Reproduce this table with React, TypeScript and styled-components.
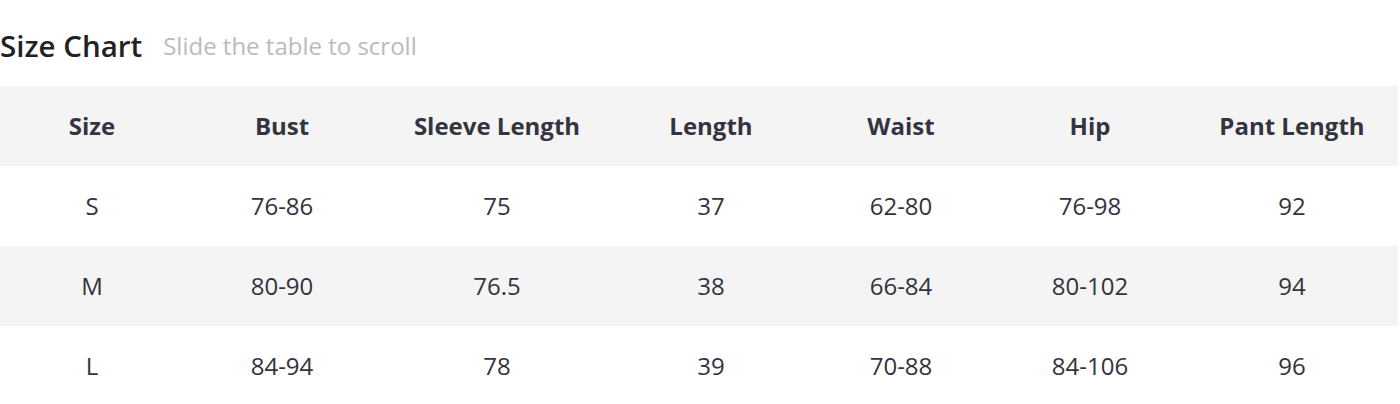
import React from "react";
import styled, { createGlobalStyle } from "styled-components";

const Global = createGlobalStyle`
  html, body { margin: 0; padding: 0; background: #fff; }
  body { font-family: "Open Sans", "Noto Sans", sans-serif; }
`;

const Wrap = styled.div`
  width: 1398px;
`;

const TitleBar = styled.div`
  display: flex;
  align-items: center;
  gap: 21px;
  height: 86px;
  box-sizing: border-box;
  padding-top: 4px;
`;

const Title = styled.h2`
  margin: 0;
  font-size: 29.5px;
  font-weight: 600;
  color: #222;
`;

const Hint = styled.span`
  font-size: 24px;
  color: #bbb;
`;

const Table = styled.table`
  border-collapse: collapse;
  table-layout: fixed;
  width: 1398px;
`;

const Row = styled.tr<{ $shade: boolean }>`
  height: 80px;
  background: ${(p) => (p.$shade ? "#f4f4f4" : "#fff")};
`;

const Th = styled.th`
  font-size: 24px;
  font-weight: 700;
  color: #343441;
  text-align: center;
  padding: 0 0 2px;
`;

const Td = styled.td`
  font-size: 24px;
  font-weight: 400;
  color: #33333d;
  text-align: center;
  padding: 0 0 2px;
`;

const widths = [184, 196, 234, 194, 186, 192, 212];
const heads = ["Size", "Bust", "Sleeve Length", "Length", "Waist", "Hip", "Pant Length"];
const rows = [
  ["S", "76-86", "75", "37", "62-80", "76-98", "92"],
  ["M", "80-90", "76.5", "38", "66-84", "80-102", "94"],
  ["L", "84-94", "78", "39", "70-88", "84-106", "96"],
];

export default function App() {
  return (
    <Wrap>
      <Global />
      <TitleBar>
        <Title>Size Chart</Title>
        <Hint>Slide the table to scroll</Hint>
      </TitleBar>
      <Table>
        <colgroup>
          {widths.map((w, i) => (
            <col key={i} style={{ width: w }} />
          ))}
        </colgroup>
        <thead>
          <Row $shade>
            {heads.map((h) => (
              <Th key={h}>{h}</Th>
            ))}
          </Row>
        </thead>
        <tbody>
          {rows.map((r, i) => (
            <Row key={i} $shade={i % 2 === 1}>
              {r.map((c, j) => (
                <Td key={j}>{c}</Td>
              ))}
            </Row>
          ))}
        </tbody>
      </Table>
    </Wrap>
  );
}
